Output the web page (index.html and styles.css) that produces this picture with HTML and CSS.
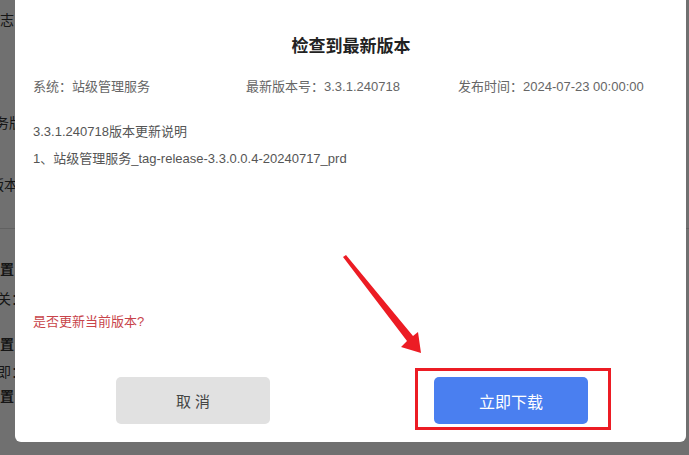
FILE: index.html
```html
<!DOCTYPE html>
<html lang="zh-CN">
<head>
    <meta charset="UTF-8">
    <meta name="viewport" content="width=device-width, initial-scale=1.0">
    <title>检查到最新版本</title>
    <link rel="stylesheet" href="styles.css">
</head>
<body>
    <!-- 背景页面 -->
    <div class="page">
        <div class="page-row row-log">日志</div>
        <div class="page-row row-svc">服务版本</div>
        <div class="page-row row-ver">版本</div>
        <div class="page-line"></div>
        <div class="page-row row-set1 bold">设置</div>
        <div class="page-row row-sw">开关：</div>
        <div class="page-row row-set2 bold">设置</div>
        <div class="page-row row-now">立即：</div>
        <div class="page-row row-set3 bold">设置</div>
    </div>
    <div class="mask"></div>

    <!-- 更新弹窗 -->
    <div class="dialog">
        <h2 class="dialog-title">检查到最新版本</h2>
        <div class="info-row">
            <span>系统：站级管理服务</span>
            <span>最新版本号：3.3.1.240718</span>
            <span>发布时间：2024-07-23 00:00:00</span>
        </div>
        <div class="notes">
            <p>3.3.1.240718版本更新说明</p>
            <p>1、站级管理服务_tag-release-3.3.0.0.4-20240717_prd</p>
        </div>
        <p class="question">是否更新当前版本?</p>
        <div class="footer">
            <button class="btn btn-cancel">取 消</button>
            <button class="btn btn-primary">立即下载</button>
        </div>
    </div>

    <!-- 标注 -->
    <div class="mark-box"></div>
    <svg class="mark-arrow" width="100" height="110" viewBox="0 0 100 110">
        <polygon points="13,7 16,5 83,86 88,82 91,103 71,97 77,91" fill="#ec1c24"/>
    </svg>
</body>
</html>
```

FILE: styles.css
```css
body {
    margin: 0;
    width: 689px;
    height: 455px;
    overflow: hidden;
    position: relative;
    background: #fff;
    font-family: 'Liberation Sans', 'Noto Sans CJK SC', sans-serif;
}

.page {
    display: flex;
    flex-direction: column;
    font-size: 14px;
    color: #333;
    white-space: nowrap;
}

.page-row {
    line-height: 20px;
}

.bold {
    font-weight: bold;
}

.row-log { margin: 10px 0 0 -14px; }
.row-svc { margin: 83px 0 0 -19px; }
.row-ver { margin: 42px 0 0 -10px; }
.page-line { margin-top: 33px; border-top: 1px solid #ddd; }
.row-set1 { margin: 30px 0 0 -14px; }
.row-sw { margin: 10px 0 0 -17px; }
.row-set2 { margin: 25px 0 0 -14px; }
.row-now { margin: 8px 0 0 -17px; }
.row-set3 { margin: 4px 0 0 -14px; }

.mask {
    position: absolute;
    inset: 0;
    background: rgba(0, 0, 0, 0.56);
}

.dialog {
    position: absolute;
    left: 15px;
    top: -8px;
    width: 671px;
    height: 450px;
    box-sizing: border-box;
    padding: 43px 17px 18px 18px;
    background: #fff;
    border-radius: 6px;
    display: flex;
    flex-direction: column;
}

.dialog-title {
    margin: 0;
    text-align: center;
    font-size: 17px;
    line-height: 24px;
    color: #222;
}

.info-row {
    display: grid;
    grid-template-columns: 213px 212px 1fr;
    margin-top: 18px;
    font-size: 13px;
    line-height: 20px;
    color: #666;
}

.notes {
    margin-top: 25px;
    font-size: 13px;
    color: #555;
}

.notes p {
    margin: 0 0 7px;
    line-height: 20px;
}

.question {
    margin: auto 0 0;
    font-size: 13px;
    line-height: 20px;
    color: #c8444a;
}

.footer {
    display: flex;
    justify-content: center;
    gap: 164px;
    margin-top: 45px;
    padding-left: 2px;
}

.btn {
    width: 154px;
    height: 47px;
    border: none;
    border-radius: 5px;
    font-family: inherit;
    font-size: 15px;
    cursor: pointer;
}

.btn-cancel {
    background: #e1e1e1;
    color: #444;
}

.btn-primary {
    background: #4a7ff0;
    color: #fff;
    font-size: 16px;
}

.mark-box {
    position: absolute;
    left: 415px;
    top: 368px;
    width: 190px;
    height: 56px;
    border: 3px solid #ec1c24;
}

.mark-arrow {
    position: absolute;
    left: 330px;
    top: 250px;
}
```
